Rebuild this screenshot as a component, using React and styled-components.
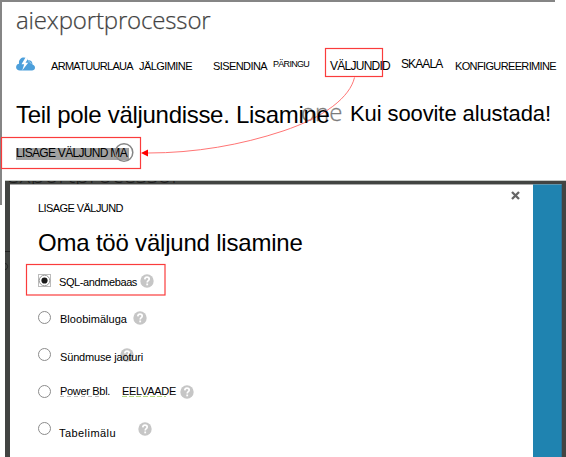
import React from "react";
import styled, { createGlobalStyle } from "styled-components";

const GlobalStyle = createGlobalStyle`
  * { box-sizing: border-box; }
  body { margin: 0; background: #fff; }
`;

const Screen = styled.div`
  position: relative;
  width: 566px;
  height: 457px;
  overflow: hidden;
  background: #fff;
  color: #000;
  font-family: "Liberation Sans", Arial, sans-serif;
`;

const Page = styled.header`
  width: 555px;
  height: 180px;
  border-top: 2px solid #858585;
  border-left: 2px solid #858585;
  padding-left: 14px;
`;

const Label = styled.span`
  display: block;
  position: relative;
  z-index: 1;
  flex: none;
  white-space: pre;
  width: ${(p) => p.$width}px;
  margin-top: ${(p) => p.$top || 0}px;
  margin-left: ${(p) => p.$gap || 0}px;
  font-size: ${(p) => p.$size || 11}px;
  line-height: 14px;
  letter-spacing: ${(p) => p.$spacing || 0}px;
`;

const AppTitle = styled.h1`
  margin: 0;
  height: 46px;
  padding-top: 2px;
  font: 300 24px/32px "Open Sans", sans-serif;
  letter-spacing: -0.15px;
  color: #3c3c3c;
  -webkit-text-stroke: 0.25px #555;
`;

const Nav = styled.nav`
  display: flex;
  height: 53px;
  padding-top: 9px;

  svg { flex: none; }
`;

const Headline = styled.h2`
  display: flex;
  margin: 0;
  height: 47px;
  font-size: 24px;
  font-weight: 400;
  line-height: 28px;
  white-space: pre;
`;

const HeadlineText = styled.span`
  position: relative;
  z-index: 1;
  flex: none;
  width: 334px;
  letter-spacing: -0.3px;
`;

const HeadlineTail = styled.span`
  font-size: 22px;
  margin-top: -1px;
  letter-spacing: -0.1px;
`;

const GhostWord = styled.span`
  position: absolute;
  left: 301px;
  top: 96px;
  font: 300 24px/32px "Open Sans", sans-serif;
  color: #777;
  -webkit-text-stroke: 0.3px #888;
`;

const AddOutput = styled.button`
  display: block;
  width: 113px;
  height: 12px;
  padding: 0;
  border: 0;
  background: #a0a0a0;
  color: #000;
  font: 12px/11px "Liberation Sans", Arial, sans-serif;
  letter-spacing: -0.69px;
  text-align: left;
  white-space: nowrap;

  span { display: block; height: 12px; }
`;

const Lower = styled.main`
  display: flex;
  height: 277px;
`;

const PageEdge = styled.div`
  width: 5px;
  height: 25px;
  border-left: 2px solid #858585;
`;

const Backdrop = styled.div`
  position: relative;
  display: flex;
  flex: 1;
  padding: 4px 4px 0 5px;
  border-top: 1px solid #c4c8c4;
  background: #424442;
  overflow: hidden;
`;

const CoveredTitle = styled.span`
  position: absolute;
  left: 1px;
  top: -23px;
  font: 300 24px/32px "Open Sans", sans-serif;
  letter-spacing: -0.3px;
  color: #1c1c1c;
`;

const Dialog = styled.section`
  position: relative;
  width: 523px;
  padding: 16px 0 0 28px;
  border-top: 1px solid #aaa;
  margin-top: -1px;
  background: #fff;
`;

const SidePanel = styled.aside`
  flex: 1;
  margin-top: -1px;
  border-right: 1px solid #2a6f92;
  border-top: 1px solid #5d95ad;
  background: #1f83b0;
`;

const DialogTitle = styled.h3`
  margin: 14px 0 17px;
  font-size: 24px;
  font-weight: 400;
  line-height: 28px;
  letter-spacing: -0.2px;
`;

const Option = styled.label`
  display: flex;
  align-items: flex-start;
  height: ${(p) => p.$height}px;

  svg { flex: none; }
`;

const Radio = styled.span`
  flex: none;
  width: 13px;
  height: 13px;
  margin-left: -0.5px;
  border: 1.5px solid #8c8c8c;
  border-radius: 50%;
`;

const Help = styled.svg`
  margin-left: ${(p) => p.$gap}px;
  margin-top: ${(p) => p.$top || 0}px;
`;

const Markup = styled.svg`
  position: absolute;
  inset: 0;
  pointer-events: none;
`;

const CloseButton = styled.svg`
  position: absolute;
  left: 501px;
  top: 6px;
`;

const CloudIcon = () => (
  <svg width="20" height="16" viewBox="0 0 20 16">
    <path d="M4 13.5C1 13.5-.5 11.5.3 9 .8 7.5 2 6.800 3 6.700 2.500 3 5 .5 8 .6c2 .1 3.500 1 4.200 2.800 1.500-.5 3 .2 3.800 1.800.5 1 .5 1.700.4 2.400C18 8 19 9.200 19 10.700c0 1.700-1.500 2.800-3 2.800z" fill="#4c9fdb" />
    <path d="M9.500.5 5.500 7.300h2.700L6.200 13.500l6-7.700H9.500L12 1.800z" fill="#fff" />
    <path d="M12.500 4.800c1.500-.2 2.500.6 2.700 2" stroke="#a9d2ef" fill="none" />
  </svg>
);

const HelpIcon = ({ gap, top }) => (
  <Help $gap={gap} $top={top} width="14" height="14" viewBox="0 0 14 14">
    <circle cx="7" cy="7" r="6.700" fill="#c6c6c6" />
    <path d="M4.800 5.400C4.900 3.900 5.800 3.200 7 3.200s2.200.7 2.200 1.900C9.200 6.700 7.200 6.700 7.200 8.500" stroke="#fff" strokeWidth="1.700" fill="none" />
    <rect x="6.300" y="9.500" width="1.800" height="1.800" fill="#fff" />
  </Help>
);

const SelectedRadio = () => (
  <svg width="13" height="13" viewBox="0 0 13 13">
    <rect x=".5" y=".5" width="12" height="12" fill="none" stroke="#777" strokeDasharray="1 1" />
    <circle cx="6.500" cy="6.500" r="5.300" fill="#fff" stroke="#999" />
    <circle cx="6.500" cy="6.500" r="3.100" fill="#1a1a1a" />
  </svg>
);

export default function App() {
  return (
    <Screen>
      <GlobalStyle />
      <GhostWord>one</GhostWord>
      <Page>
        <AppTitle>aiexportprocessor</AppTitle>
        <Nav>
          <CloudIcon />
          <Label $gap={15} $top={2} $width={88} $spacing={-0.69}>ARMATUURLAUA</Label>
          <Label $top={2} $width={74} $spacing={-0.56}>JÄLGIMINE</Label>
          <Label $top={2} $width={60} $spacing={-0.59}>SISENDINA</Label>
          <Label $top={0} $width={57} $size={9} $spacing={-0.7}>PÄRINGU</Label>
          <Label $top={2} $width={71} $size={12} $spacing={-0.74}>VÄLJUNDID</Label>
          <Label $top={0} $width={54} $size={12} $spacing={-0.9}>SKAALA</Label>
          <Label $top={2} $width={104} $spacing={-0.64}>KONFIGUREERIMINE</Label>
        </Nav>
        <Headline>
          <HeadlineText>Teil pole väljundisse. Lisamine</HeadlineText>
          <HeadlineTail>Kui soovite alustada!</HeadlineTail>
        </Headline>
        <AddOutput><span>LISAGE VÄLJUND MA</span></AddOutput>
      </Page>

      <Lower>
        <PageEdge />
        <Backdrop>
          <CoveredTitle>exportprocessor</CoveredTitle>
          <Dialog>
            <Label $width={100} $spacing={-0.57}>LISAGE VÄLJUND</Label>
            <CloseButton width="9" height="9" viewBox="0 0 9 9">
              <path d="M1 1l7 7M8 1L1 8" stroke="#666" strokeWidth="2.300" />
            </CloseButton>
            <DialogTitle>Oma töö väljund lisamine</DialogTitle>
            <Option $height={37}>
              <SelectedRadio />
              <Label $gap={8} $top={1} $width={80} $spacing={-0.4}>SQL-andmebaas</Label>
              <HelpIcon gap={1} />
            </Option>
            <Option $height={37}>
              <Radio />
              <Label $gap={9.5} $top={1} $width={73} $spacing={0.03}>Bloobimäluga</Label>
              <HelpIcon gap={0} />
            </Option>
            <Option $height={37}>
              <Radio />
              <Label $gap={9.5} $top={2} $width={60} $spacing={-0.16}>Sündmuse jaoturi</Label>
              <HelpIcon gap={0} />
            </Option>
            <Option $height={37}>
              <Radio />
              <Label $gap={9.5} $top={-1} $width={62} $spacing={-0.32}>Power Bbl.</Label>
              <Label $top={-1} $width={58} $spacing={-0.31}>EELVAADE</Label>
              <HelpIcon gap={0} />
            </Option>
            <Option $height={28}>
              <Radio />
              <Label $gap={8.5} $top={4} $width={79} $spacing={0.44}>Tabelimälu</Label>
              <HelpIcon gap={0} />
            </Option>
          </Dialog>
          <SidePanel />
        </Backdrop>
      </Lower>

      <Markup width="566" height="457" viewBox="0 0 566 457" fill="none">
        <circle cx="124" cy="152.500" r="8.800" stroke="#858585" strokeWidth="1.500" />
        <path d="M5 251.500h5M5 263.500c3.500 0 3.500 6 0 6" stroke="#222" />
        <path d="M60 396.500h39" stroke="#bbb" strokeDasharray="4 3" />
        <path d="M122 396.500h44" stroke="#b5d97c" strokeDasharray="5 2" />
        <path d="M354.500 77.500C350 97 325 117 283 131S195 153 148 153" stroke="#ff7575" />
        <path d="M141 153l7-3.500v7z" fill="#f00" />
        <g stroke="#fa3c3c" strokeWidth="1.200">
          <rect x="325.500" y="48.500" width="57" height="28" />
          <rect x="1.500" y="137.500" width="139" height="31" />
          <rect x="26.500" y="264.500" width="138.500" height="30.500" />
        </g>
      </Markup>
    </Screen>
  );
}
